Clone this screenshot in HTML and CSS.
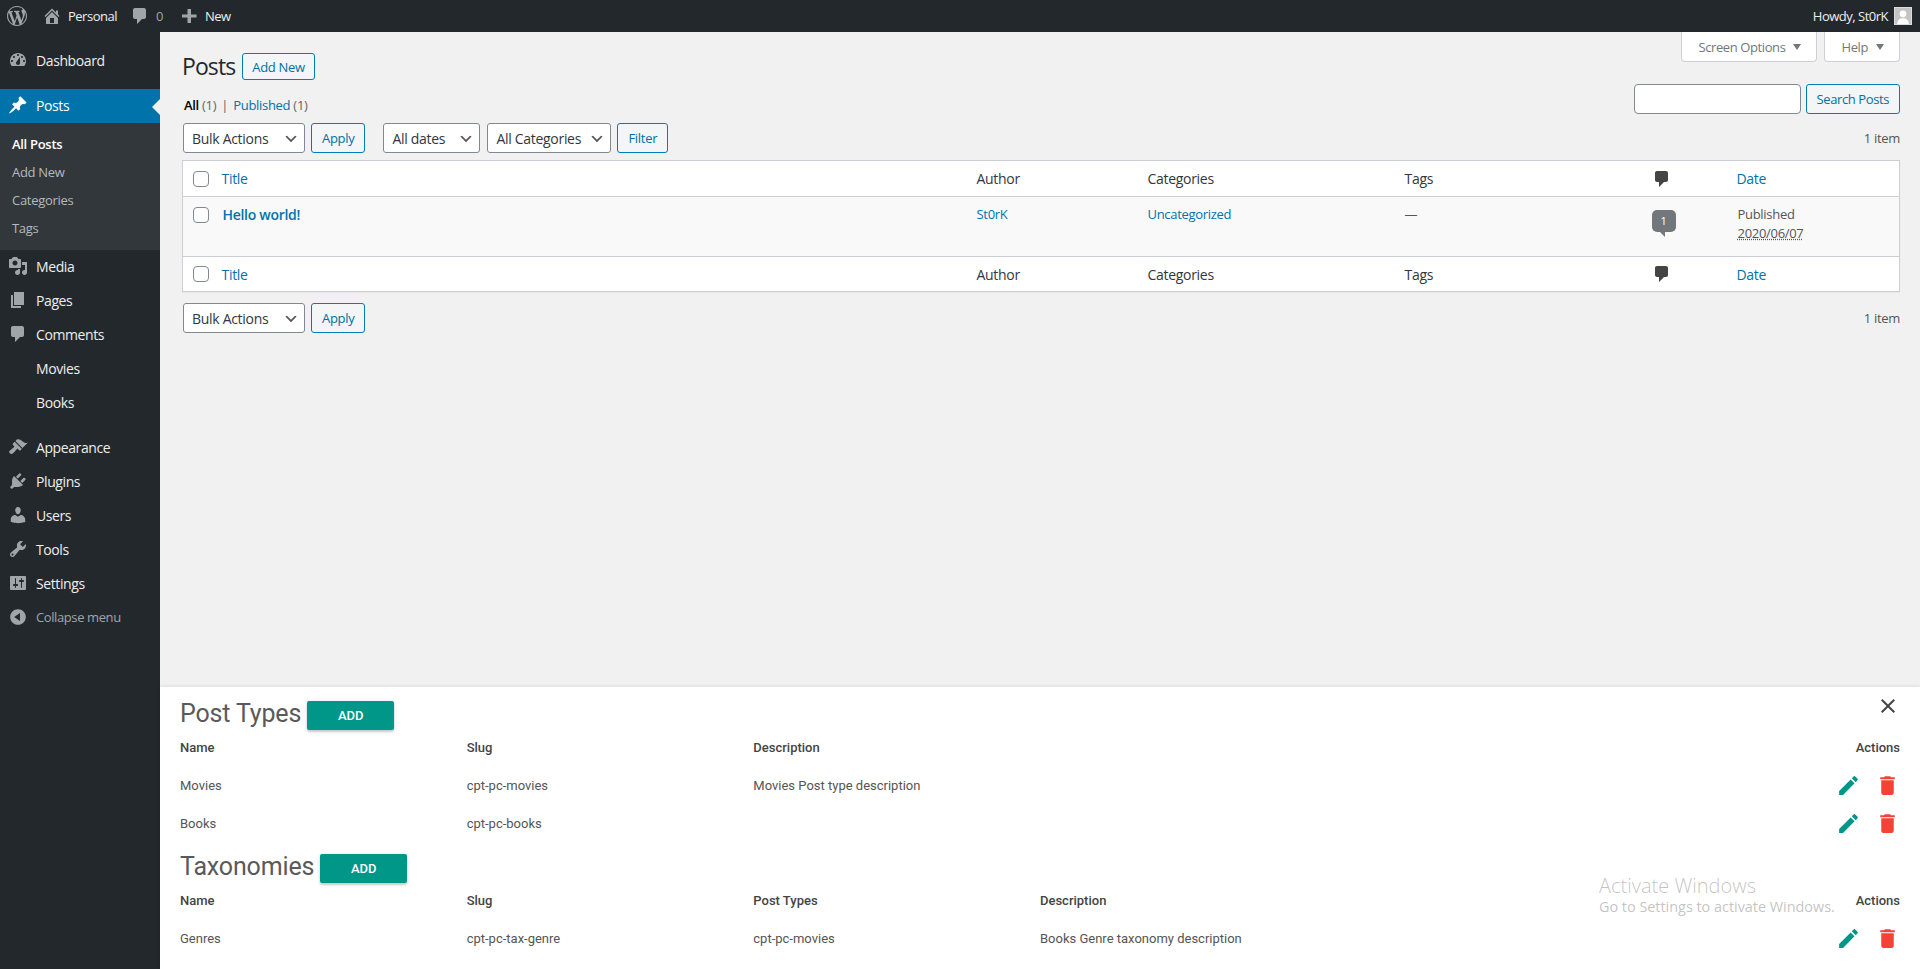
FILE: index.html
```html
<!DOCTYPE html>
<html lang="en">
<head>
  <meta charset="UTF-8">
  <title>Posts</title>
  <link rel="stylesheet" href="styles.css">
</head>
<body>
  <svg class="sprites" xmlns="http://www.w3.org/2000/svg">
    <symbol id="i-wp" viewBox="0 0 20 20"><path fill-rule="evenodd" d="M20 10c0-5.51-4.49-10-10-10C4.48 0 0 4.49 0 10c0 5.52 4.48 10 10 10 5.51 0 10-4.48 10-10zM7.78 15.37L4.37 6.22c.55-.02 1.17-.08 1.17-.08.5-.06.44-1.13-.06-1.11 0 0-1.45.11-2.37.11-.18 0-.37 0-.58-.01C4.12 2.69 6.87 1.11 10 1.11c2.33 0 4.45.87 6.05 2.34-.68-.11-1.65.39-1.65 1.58 0 .74.45 1.36.9 2.1.35.61.55 1.36.55 2.46 0 1.49-1.4 5-1.4 5l-3.03-8.37c.54-.02.82-.17.82-.17.5-.05.44-1.25-.06-1.22 0 0-1.44.12-2.38.12-.87 0-2.33-.12-2.33-.12-.5-.03-.56 1.2-.06 1.22l.92.08 1.26 3.41zM17.41 10c.24-.64.74-1.87.43-4.25.7 1.29 1.05 2.71 1.05 4.25 0 3.29-1.73 6.24-4.4 7.78.97-2.59 1.94-5.2 2.92-7.78zM6.1 18.09C3.12 16.65 1.11 13.53 1.11 10c0-1.3.23-2.48.72-3.59C3.25 10.3 4.67 14.2 6.1 18.09zm4.03-6.63l2.58 6.98c-.86.29-1.76.45-2.71.45-.79 0-1.57-.11-2.29-.33.81-2.38 1.62-4.74 2.42-7.1z"/></symbol>
    <symbol id="i-home" viewBox="0 0 20 20"><path fill-rule="evenodd" d="M16 8.5l1.53 1.53-1.06 1.06L10 4.62l-6.47 6.47-1.06-1.06L10 2.5l4 4v-2h2v4zm-6-2.46l6 5.99V18H4v-5.97zM12 17v-5H8v5h4z"/></symbol>
    <symbol id="i-comment" viewBox="0 0 20 20"><path d="M5 2h9c1.1 0 2 .9 2 2v7c0 1.1-.9 2-2 2h-2l-5 5v-5H5c-1.1 0-2-.9-2-2V4c0-1.1.9-2 2-2z"/></symbol>
    <symbol id="i-plus" viewBox="0 0 20 20"><path d="M12 3v5.5h5.5v3H12V17H8.5v-5.500H3v-3h5.500V3z"/></symbol>
    <symbol id="i-dashboard" viewBox="0 0 20 20"><path fill-rule="evenodd" d="M3.76 16h12.48c1.1-1.37 1.76-3.11 1.76-5 0-4.42-3.58-8-8-8s-8 3.58-8 8c0 1.89.66 3.63 1.76 5zM10 4c.55 0 1 .45 1 1s-.45 1-1 1-1-.45-1-1 .45-1 1-1zM6 6c.55 0 1 .45 1 1s-.45 1-1 1-1-.45-1-1 .45-1 1-1zm8 0c.55 0 1 .45 1 1s-.45 1-1 1-1-.45-1-1 .45-1 1-1zm-5.370 5.550L12 7v6c0 1.100-.9 2-2 2s-2-.9-2-2c0-.57.24-1.080.63-1.450zM4 10c.55 0 1 .45 1 1s-.45 1-1 1-1-.45-1-1 .45-1 1-1zm12 0c.55 0 1 .45 1 1s-.45 1-1 1-1-.45-1-1 .45-1 1-1z"/></symbol>
    <symbol id="i-pin" viewBox="0 0 20 20"><path d="M10.44 3.020l1.820-1.820 6.360 6.350-1.830 1.820c-1.050-.68-2.480-.57-3.410.36l-.75.75c-.92.93-1.040 2.350-.35 3.410l-1.830 1.820-2.410-2.410-2.800 2.790c-.42.42-3.380 2.710-3.800 2.290s1.860-3.390 2.280-3.810l2.790-2.790L4.100 9.360l1.830-1.820c1.050.69 2.480.57 3.400-.36l.75-.75c.93-.92 1.050-2.350.36-3.410z"/></symbol>
    <symbol id="i-media" viewBox="0 0 20 20"><path fill-rule="evenodd" d="M13 11V4c0-.55-.45-1-1-1h-1.670L9 1H5L3.670 3H2c-.55 0-1 .45-1 1v7c0 .55.45 1 1 1h10c.55 0 1-.45 1-1zM7 4.500c1.380 0 2.500 1.120 2.500 2.500S8.380 9.500 7 9.500 4.500 8.380 4.500 7 5.620 4.500 7 4.500zM14 6h5v10.500c0 1.380-1.120 2.500-2.500 2.500S14 17.880 14 16.500s1.120-2.500 2.500-2.500c.17 0 .34.02.5.05V9h-3V6zm-4 8.050V13h2v3.500c0 1.380-1.120 2.500-2.500 2.500S7 17.880 7 16.500 8.120 14 9.500 14c.17 0 .34.02.5.05z"/></symbol>
    <symbol id="i-pages" viewBox="0 0 20 20"><path d="M6 15V2h10v13H6zm-1 1h8v2H3V5h2v11z"/></symbol>
    <symbol id="i-appearance" viewBox="0 0 20 20"><path d="M14.480 11.060L7.410 3.990l1.500-1.500c.5-.56 2.300-.47 3.510.32 1.210.8 1.430 1.280 2.910 2.100 1.180.64 2.450 1.260 4.450.85zm-.71.71L6.700 4.700 4.930 6.470c-.39.39-.39 1.020 0 1.410l1.060 1.060c.39.39.39 1.030 0 1.420-.6.6-1.430 1.110-2.210 1.690-.35.26-.7.53-1.010.84C1.430 13.230.4 14.910 1.800 16.300s3.070.37 4.400-.96c.31-.31.58-.65.84-1 .58-.78 1.090-1.610 1.690-2.210.39-.39 1.020-.39 1.410 0l1.060 1.060c.39.39 1.020.39 1.410 0z"/></symbol>
    <symbol id="i-plugins" viewBox="0 0 20 20"><path d="M13.110 4.360L9.870 7.600 8 5.730l3.240-3.240c.35-.34 1.050-.2 1.560.32.52.51.66 1.210.31 1.550zm-8 1.770l.91-1.120 9.010 9.010-1.190.84c-.71.71-2.630 1.160-3.820 1.160H6.140L4.900 17.260c-.59.59-1.540.59-2.120 0-.59-.58-.59-1.530 0-2.120l1.240-1.240v-3.880c0-1.130.4-3.190 1.090-3.890zm7.260 3.970l3.240-3.240c.34-.35 1.040-.21 1.550.31.52.51.66 1.210.31 1.550l-3.240 3.250z"/></symbol>
    <symbol id="i-users" viewBox="0 0 20 20"><path d="M10 9.250c-2.270 0-2.730-3.440-2.730-3.440C7 4.020 7.820 2 9.970 2c2.160 0 2.980 2.020 2.710 3.810 0 0-.41 3.440-2.68 3.440zm0 2.570L12.720 10c2.390 0 4.520 2.330 4.520 4.530v2.490s-3.650 1.130-7.240 1.130c-3.650 0-7.240-1.130-7.240-1.130v-2.490c0-2.250 1.940-4.480 4.470-4.480z"/></symbol>
    <symbol id="i-tools" viewBox="0 0 20 20"><path fill-rule="evenodd" d="M16.680 9.770c-1.340 1.340-3.300 1.670-4.950.99l-5.410 6.520c-.99.99-2.590.99-3.580 0s-.99-2.590 0-3.570l6.520-5.420c-.68-1.650-.35-3.610.99-4.950 1.280-1.280 3.120-1.620 4.720-1.060l-2.890 2.890 2.820 2.820 2.860-2.870c.53 1.580.18 3.390-1.080 4.650zM3.810 16.210c.4.39 1.040.39 1.430 0 .4-.4.4-1.040 0-1.430-.39-.4-1.030-.4-1.430 0-.39.39-.39 1.030 0 1.430z"/></symbol>
    <symbol id="i-settings" viewBox="0 0 20 20"><path fill-rule="evenodd" d="M18 16V4c0-.55-.45-1-1-1H3c-.55 0-1 .45-1 1v12c0 .55.45 1 1 1h14c.55 0 1-.45 1-1zM8 11h1c.55 0 1 .45 1 1s-.45 1-1 1H8v1.500c0 .28-.22.5-.5.5s-.5-.22-.5-.5V13H6c-.55 0-1-.45-1-1s.45-1 1-1h1V5.500c0-.28.22-.5.5-.5s.5.22.5.5V11zm5-2h-1c-.55 0-1-.45-1-1s.45-1 1-1h1V5.500c0-.28.22-.5.5-.5s.5.22.5.5V7h1c.55 0 1 .45 1 1s-.45 1-1 1h-1v5.500c0 .28-.22.5-.5.5s-.5-.22-.5-.5V9z"/></symbol>
    <symbol id="i-collapse" viewBox="0 0 20 20"><path fill-rule="evenodd" d="M10 2.160c4.330 0 7.840 3.510 7.840 7.840s-3.510 7.840-7.840 7.840S2.160 14.330 2.160 10 5.710 2.160 10 2.160zm2 11.720V6.120L6.180 9.970z"/></symbol>
    <symbol id="i-edit" viewBox="0 0 24 24"><path d="M3 17.250V21h3.750L17.810 9.940l-3.750-3.750L3 17.250zM20.710 7.040c.39-.39.39-1.020 0-1.410l-2.340-2.340c-.39-.39-1.020-.39-1.410 0l-1.830 1.830 3.750 3.750 1.830-1.830z"/></symbol>
    <symbol id="i-delete" viewBox="0 0 24 24"><path d="M6 19c0 1.100.9 2 2 2h8c1.100 0 2-.9 2-2V7H6v12zM19 4h-3.500l-1-1h-5l-1 1H5v2h14V4z"/></symbol>
    <symbol id="i-close" viewBox="0 0 24 24"><path d="M19 6.410L17.590 5 12 10.590 6.410 5 5 6.410 10.590 12 5 17.590 6.410 19 12 13.410 17.590 19 19 17.590 13.410 12z"/></symbol>
  </svg>

  <!-- Admin Bar -->
  <header class="adminbar">
    <div class="bar-group">
      <svg class="bar-icon bar-logo"><use href="#i-wp"/></svg>
      <svg class="bar-icon bar-home"><use href="#i-home"/></svg>
      <span class="bar-label">Personal</span>
      <svg class="bar-icon bar-bubble"><use href="#i-comment"/></svg>
      <span class="bar-count">0</span>
      <svg class="bar-icon bar-plus"><use href="#i-plus"/></svg>
      <span class="bar-label">New</span>
    </div>
    <div class="bar-group">
      <span class="bar-label">Howdy, St0rK</span>
      <span class="avatar">
        <svg viewBox="0 0 18 18"><circle cx="9" cy="6.500" r="3.800"/><path d="M2.500 18c0-4.500 2.500-6.500 6.500-6.500s6.500 2 6.500 6.500z"/></svg>
      </span>
    </div>
  </header>

  <div class="layout">
    <!-- Side Menu -->
    <nav class="sidemenu">
      <a class="menu-item"><svg class="menu-icon"><use href="#i-dashboard"/></svg>Dashboard</a>
      <div class="menu-sep"></div>
      <a class="menu-item active"><svg class="menu-icon"><use href="#i-pin"/></svg>Posts</a>
      <ul class="submenu">
        <li class="current">All Posts</li>
        <li>Add New</li>
        <li>Categories</li>
        <li>Tags</li>
      </ul>
      <a class="menu-item"><svg class="menu-icon"><use href="#i-media"/></svg>Media</a>
      <a class="menu-item"><svg class="menu-icon"><use href="#i-pages"/></svg>Pages</a>
      <a class="menu-item"><svg class="menu-icon"><use href="#i-comment"/></svg>Comments</a>
      <a class="menu-item no-icon">Movies</a>
      <a class="menu-item no-icon">Books</a>
      <div class="menu-sep"></div>
      <a class="menu-item"><svg class="menu-icon"><use href="#i-appearance"/></svg>Appearance</a>
      <a class="menu-item"><svg class="menu-icon"><use href="#i-plugins"/></svg>Plugins</a>
      <a class="menu-item"><svg class="menu-icon"><use href="#i-users"/></svg>Users</a>
      <a class="menu-item"><svg class="menu-icon"><use href="#i-tools"/></svg>Tools</a>
      <a class="menu-item"><svg class="menu-icon"><use href="#i-settings"/></svg>Settings</a>
      <a class="menu-item collapse"><svg class="menu-icon"><use href="#i-collapse"/></svg>Collapse menu</a>
    </nav>

    <main class="main">
      <div class="wrap">
        <div class="screen-links">
          <span class="screen-tab">Screen Options<i class="caret"></i></span>
          <span class="screen-tab">Help<i class="caret"></i></span>
        </div>

        <div class="page-head">
          <h1>Posts</h1>
          <a class="btn">Add New</a>
        </div>

        <div class="views-row">
          <div class="views"><strong>All</strong> <span class="count">(1)</span> <span class="divider">|</span> <a>Published</a> <span class="count">(1)</span></div>
          <div class="search">
            <input type="text" class="search-input">
            <a class="btn">Search Posts</a>
          </div>
        </div>

        <div class="tablenav top">
          <select class="sel sel-bulk"><option>Bulk Actions</option></select>
          <a class="btn">Apply</a>
          <select class="sel sel-dates"><option>All dates</option></select>
          <select class="sel sel-cats"><option>All Categories</option></select>
          <a class="btn">Filter</a>
          <span class="num">1 item</span>
        </div>

        <table class="posts">
          <thead>
            <tr>
              <th class="c-check"><input type="checkbox"></th>
              <th class="c-title"><a>Title</a></th>
              <th class="c-author">Author</th>
              <th class="c-cats">Categories</th>
              <th class="c-tags">Tags</th>
              <th class="c-comm"><svg class="comm-head"><use href="#i-comment"/></svg></th>
              <th class="c-date"><a>Date</a></th>
            </tr>
          </thead>
          <tbody>
            <tr>
              <td class="c-check"><input type="checkbox"></td>
              <td class="post-title"><a>Hello world!</a></td>
              <td><a>St0rK</a></td>
              <td><a>Uncategorized</a></td>
              <td>—</td>
              <td class="c-comm"><span class="comm-badge">1</span></td>
              <td class="post-date">Published<br><abbr>2020/06/07</abbr></td>
            </tr>
          </tbody>
          <tfoot>
            <tr>
              <th class="c-check"><input type="checkbox"></th>
              <th><a>Title</a></th>
              <th>Author</th>
              <th>Categories</th>
              <th>Tags</th>
              <th class="c-comm"><svg class="comm-head"><use href="#i-comment"/></svg></th>
              <th><a>Date</a></th>
            </tr>
          </tfoot>
        </table>

        <div class="tablenav bottom">
          <select class="sel sel-bulk"><option>Bulk Actions</option></select>
          <a class="btn">Apply</a>
          <span class="num">1 item</span>
        </div>
      </div>

      <!-- Custom Post Types Panel -->
      <section class="panel">
        <svg class="panel-close"><use href="#i-close"/></svg>

        <div class="panel-head">
          <h2>Post Types</h2>
          <a class="add-btn">ADD</a>
        </div>
        <table class="cpt">
          <tr>
            <th>Name</th><th>Slug</th><th colspan="3">Description</th><th class="right">Actions</th>
          </tr>
          <tr>
            <td>Movies</td><td>cpt-pc-movies</td><td colspan="3">Movies Post type description</td>
            <td class="right"><svg class="act edit"><use href="#i-edit"/></svg><svg class="act del"><use href="#i-delete"/></svg></td>
          </tr>
          <tr>
            <td>Books</td><td>cpt-pc-books</td><td colspan="3"></td>
            <td class="right"><svg class="act edit"><use href="#i-edit"/></svg><svg class="act del"><use href="#i-delete"/></svg></td>
          </tr>
        </table>

        <div class="panel-head second">
          <h2>Taxonomies</h2>
          <a class="add-btn">ADD</a>
        </div>
        <table class="cpt">
          <tr>
            <th>Name</th><th>Slug</th><th>Post Types</th><th colspan="2">Description</th><th class="right">Actions</th>
          </tr>
          <tr>
            <td>Genres</td><td>cpt-pc-tax-genre</td><td>cpt-pc-movies</td><td colspan="2">Books Genre taxonomy description</td>
            <td class="right"><svg class="act edit"><use href="#i-edit"/></svg><svg class="act del"><use href="#i-delete"/></svg></td>
          </tr>
        </table>

        <div class="watermark">
          <div class="wm-title">Activate Windows</div>
          <div class="wm-sub">Go to Settings to activate Windows.</div>
        </div>
      </section>
    </main>
  </div>
</body>
</html>
```

FILE: styles.css
```css
* {
  box-sizing: border-box;
}

html, body {
  height: 100%;
}

body {
  margin: 0;
  overflow: hidden;
  background: #f1f1f1;
  color: #444;
  font-family: "Open Sans", sans-serif;
  font-size: 13px;
  letter-spacing: -0.3px;
}

a {
  color: #0073aa;
  text-decoration: none;
}

.sprites {
  display: none;
}

/* Admin bar */
.adminbar {
  display: flex;
  justify-content: space-between;
  align-items: center;
  height: 32px;
  padding: 0 8px 0 7px;
  background: #23282d;
  color: #eee;
  letter-spacing: -0.5px;
}

.bar-group {
  display: flex;
  align-items: center;
}

.bar-icon {
  fill: #a0a5aa;
}

.bar-logo {
  width: 20px;
  height: 20px;
}

.bar-home {
  width: 20px;
  height: 20px;
  margin-left: 15px;
  margin-right: 6px;
}

.bar-bubble {
  width: 20px;
  height: 20px;
  margin-left: 13px;
}

.bar-count {
  margin-left: 6px;
  color: #a0a5aa;
}

.bar-plus {
  width: 20px;
  height: 20px;
  margin-left: 16px;
  margin-right: 6px;
}

.avatar {
  display: block;
  width: 18px;
  height: 18px;
  margin-left: 6px;
  background: #c4c4c4;
  border: 1px solid #ddd;
}

.avatar svg {
  display: block;
  width: 16px;
  height: 16px;
  fill: #fff;
}

/* Side menu */
.layout {
  display: flex;
  height: calc(100% - 32px);
}

.sidemenu {
  flex: 0 0 160px;
  padding-top: 12px;
  background: #23282d;
}

.menu-item {
  position: relative;
  display: flex;
  align-items: center;
  height: 34px;
  padding-bottom: 2px;
  color: #eee;
  font-size: 14px;
  letter-spacing: -0.4px;
}

.no-icon {
  padding-left: 36px;
}

.menu-icon {
  width: 20px;
  height: 20px;
  margin: 0 8px;
  fill: #a0a5aa;
}

.menu-sep {
  height: 11px;
}

.menu-item.active {
  background: #0073aa;
  color: #fff;
}

.menu-item.active .menu-icon {
  fill: #fff;
}

.menu-item.active::after {
  content: "";
  position: absolute;
  right: 0;
  top: 10px;
  border: 8px solid transparent;
  border-right-color: #f1f1f1;
  border-left-width: 0;
}

.collapse {
  color: #a0a5aa;
  font-size: 13px;
}

.submenu {
  margin: 0;
  padding: 7px 0 8px;
  list-style: none;
  background: #32373c;
  color: #b4b9be;
}

.submenu li {
  height: 28px;
  padding-left: 12px;
  line-height: 28px;
}

.submenu .current {
  color: #fff;
  font-weight: 600;
}

/* Main */
.main {
  display: flex;
  flex: 1;
  flex-direction: column;
  min-width: 0;
}

.wrap {
  flex: 1;
  padding: 0 20px 0 22px;
}

.screen-links {
  display: flex;
  float: right;
  gap: 7px;
}

.screen-tab {
  display: flex;
  align-items: center;
  justify-content: center;
  height: 30px;
  padding: 0 15px 0 16px;
  background: #fff;
  border: 1px solid #ccd0d4;
  border-top: none;
  border-radius: 0 0 4px 4px;
  color: #72777c;
  letter-spacing: -0.4px;
}

.caret {
  margin-left: 8px;
  border: 4.500px solid transparent;
  border-top: 6px solid #72777c;
  border-bottom-width: 0;
}

.page-head {
  display: flex;
  align-items: center;
  gap: 7px;
  padding-top: 21px;
}

h1 {
  margin: 0;
  color: #23282d;
  font-size: 23px;
  font-weight: 400;
  line-height: 27px;
  letter-spacing: -0.9px;
}

.btn {
  display: inline-flex;
  align-items: center;
  justify-content: center;
  height: 30px;
  padding: 0 10px;
  background: #f3f5f6;
  border: 1px solid #007cba;
  border-radius: 3px;
  color: #0071a1;
}

.page-head .btn {
  height: 27px;
  padding: 0 9px;
}

.views-row {
  display: flex;
  justify-content: space-between;
  align-items: flex-end;
  margin-top: 4px;
}

.views {
  padding: 0 0 0 2px;
  color: #666;
}

.views strong {
  color: #000;
  font-weight: 600;
}

.divider {
  margin: 0 2px;
}

.search {
  display: flex;
  gap: 5px;
}

.search-input {
  width: 167px;
  height: 30px;
  border: 1px solid #7e8993;
  border-radius: 4px;
  background: #fff;
}

.search .btn {
  padding: 0 10px;
  letter-spacing: -0.4px;
}

.tablenav {
  display: flex;
  align-items: center;
  height: 30px;
  padding-left: 1px;
}

.tablenav.top {
  margin-top: 9px;
}

.tablenav.bottom {
  margin-top: 11px;
}

.tablenav .btn {
  margin-left: 6px;
}

.num {
  margin-left: auto;
  color: #555;
}

.sel {
  height: 30px;
  padding: 0 24px 0 8px;
  appearance: none;
  background: #fff url("data:image/svg+xml,%3Csvg xmlns='http://www.w3.org/2000/svg' viewBox='0 0 20 20'%3E%3Cpath d='M5 6l5 5 5-5 2 1-7 7-7-7z' fill='%23555'/%3E%3C/svg%3E") no-repeat right 5px top 55%;
  background-size: 16px 16px;
  border: 1px solid #7e8993;
  border-radius: 3px;
  color: #32373c;
  font-family: inherit;
  font-size: 14px;
  letter-spacing: -0.3px;
}

.sel-bulk {
  width: 122px;
}

.sel-dates {
  width: 97px;
  margin-left: 18px;
}

.sel-cats {
  width: 124px;
  margin-left: 7px;
}

/* Posts table */
.posts {
  width: 100%;
  margin-top: 7px;
  border-collapse: collapse;
  table-layout: fixed;
  background: #fff;
  border: 1px solid #ccd0d4;
  box-shadow: 0 1px 1px rgba(0, 0, 0, 0.04);
}

.posts th,
.posts td {
  height: 36px;
  padding: 0 10px;
  font-weight: 400;
  font-size: 14px;
  text-align: left;
  color: #32373c;
}

.posts td {
  height: 60px;
  padding-top: 8px;
  vertical-align: top;
  font-size: 13px;
  color: #555;
  line-height: 19px;
}

.posts tbody tr {
  background: #f9f9f9;
  border-top: 1px solid #ccd0d4;
  border-bottom: 1px solid #ccd0d4;
}

.posts tfoot th {
  height: 35px;
}

.c-check {
  width: 28px;
}

.posts .c-check {
  padding: 0 0 0 10px;
}

.posts td.c-check {
  padding-top: 10px;
}

.c-title a {
  margin-left: 1px;
}

.posts tfoot th:nth-child(2) a {
  margin-left: 1px;
}

.c-author {
  width: 171px;
}

.c-cats,
.c-tags {
  width: 257px;
}

.c-comm {
  width: 75px;
}

.posts th.c-comm,
.posts td.c-comm {
  padding-left: 0;
  padding-right: 0;
}

.c-date {
  width: 173px;
}

input[type="checkbox"] {
  display: block;
  width: 16px;
  height: 16px;
  margin: 0;
  appearance: none;
  background: #fff;
  border: 1px solid #7e8993;
  border-radius: 4px;
}

.posts td.post-title {
  padding-left: 12px;
  font-size: 14px;
  font-weight: 600;
}

.comm-head {
  display: block;
  width: 20px;
  height: 20px;
  fill: #444;
}

.comm-badge {
  position: relative;
  display: block;
  width: 24px;
  height: 22px;
  margin-top: 5px;
  background: #72777c;
  border-radius: 5px;
  color: #fff;
  font-size: 11px;
  line-height: 22px;
  text-align: center;
}

.comm-badge::after {
  content: "";
  position: absolute;
  left: 8px;
  top: 22px;
  border-top: 5px solid #72777c;
  border-left: 5px solid transparent;
}

.posts td.post-date {
  padding-left: 11px;
}

abbr {
  text-decoration: underline dotted;
}

/* Bottom panel */
.panel {
  position: relative;
  flex: 0 0 282px;
  padding: 14px 20px 0;
  overflow: hidden;
  background: #fff;
  box-shadow: 0 0 4px rgba(0, 0, 0, 0.12);
  color: #555;
  font-family: Roboto, sans-serif;
  letter-spacing: 0;
}

.panel-close {
  position: absolute;
  top: 7px;
  right: 20px;
  width: 24px;
  height: 24px;
  fill: #444;
}

.panel-head {
  display: flex;
  align-items: center;
  height: 28.500px;
  gap: 6px;
}

.panel-head.second {
  margin-top: 10.500px;
}

h2 {
  margin: 0 0 2px;
  color: #5a5a5a;
  font-size: 25px;
  font-weight: 400;
  line-height: 28px;
  letter-spacing: -0.15px;
}

.add-btn {
  display: flex;
  align-items: center;
  justify-content: center;
  width: 87px;
  height: 100%;
  background: #009688;
  border-radius: 2px;
  box-shadow: 0 2px 2px rgba(0, 0, 0, 0.14), 0 1px 5px rgba(0, 0, 0, 0.12);
  color: #fff;
  font-size: 13px;
  font-weight: 500;
}

.cpt {
  width: 100%;
  border-collapse: collapse;
  table-layout: fixed;
}

.cpt th,
.cpt td {
  height: 38px;
  padding: 0 0 2px;
  text-align: left;
  font-size: 13px;
}

.cpt th {
  color: #444;
  font-weight: 500;
}

.cpt .right {
  text-align: right;
}

.act {
  width: 25px;
  height: 25px;
  vertical-align: middle;
}

.edit {
  fill: #009688;
}

.del {
  margin-left: 14px;
  fill: #f44336;
}

.watermark {
  position: absolute;
  left: 1439px;
  top: 187px;
  color: rgba(120, 120, 120, 0.45);
  font-family: "Open Sans", sans-serif;
}

.wm-title {
  font-size: 20px;
  font-weight: 300;
  line-height: 24px;
}

.wm-sub {
  font-size: 14.400px;
  line-height: 18px;
}
```
